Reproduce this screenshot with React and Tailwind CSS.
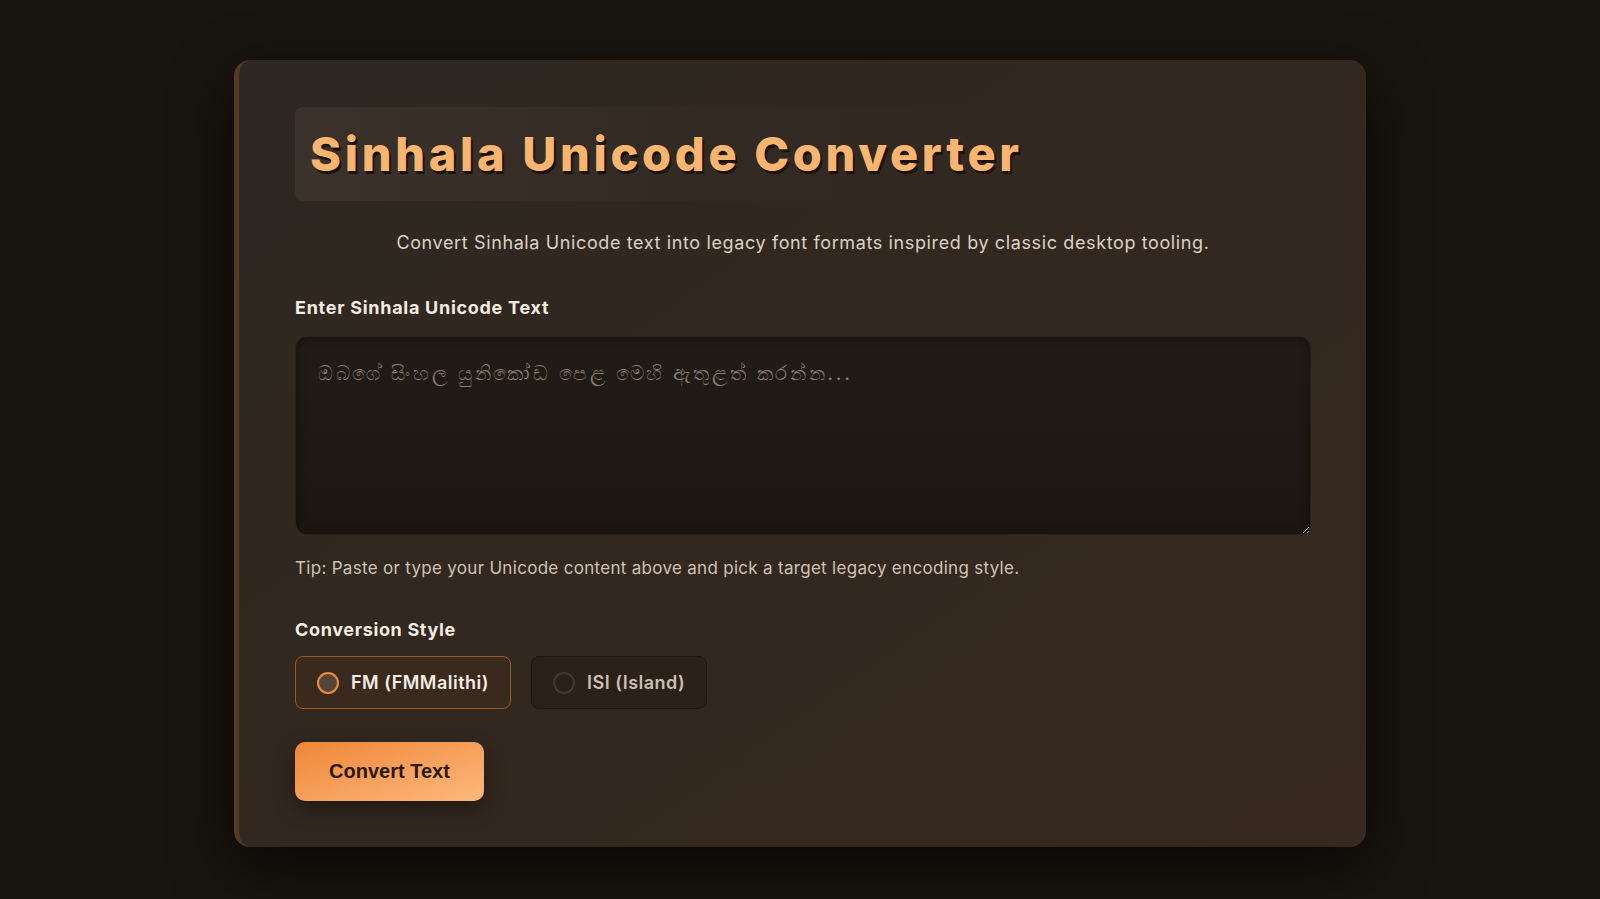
import React, { useState } from 'react'

const styles = [
  { id: 'fm', label: 'FM (FMMalithi)' },
  { id: 'isi', label: 'ISI (Island)' },
]

const StyleOption = ({ option, checked, onSelect }) => (
  <label
    className={`flex items-center gap-[12px] h-[53px] rounded-[8px] border cursor-pointer pl-[21px] pr-[21px] ${
      checked
        ? 'border-[#9c5a2a] bg-[#3a2a1e] text-[#f5ede3]'
        : 'border-[#1e1813] bg-[#2a2119] text-[#cbbfb2]'
    }`}
  >
    <input type="radio" name="style" className="sr-only" checked={checked} onChange={() => onSelect(option.id)} />
    <span
      className={`w-[22px] h-[22px] rounded-full ${
        checked ? 'border-2 border-[#ef8b3c] bg-[#55433a]' : 'border-2 border-[#453a31] bg-transparent'
      }`}
    />
    <span className="text-[18px] font-semibold tracking-[0.5px]">{option.label}</span>
  </label>
)

const App = () => {
  const [text, setText] = useState('')
  const [style, setStyle] = useState('fm')

  return (
    <div className="min-h-[899px] bg-[#18140f] pt-[60px] font-['Inter',sans-serif]">
      <div className="w-[1132px] mx-auto rounded-[16px] border-l-[5px] border-[#573822] bg-gradient-to-br from-[#2e2822] via-[#32281f] to-[#37291f] shadow-[0_20px_60px_rgba(0,0,0,0.55)] pl-[56px] pr-[55px] pt-[47px] pb-[46px]">
        {/* heading */}
        <div className="inline-block rounded-[8px] bg-gradient-to-r from-[#3a322b] via-[#322a23] to-transparent px-[15px] py-[12px]">
          <h1 className="text-[47px] leading-[70px] font-extrabold tracking-[3.65px] text-[#f8b571] [text-shadow:2px_3px_0_#1a120b]">
            Sinhala Unicode Converter
          </h1>
        </div>

        <p className="mt-[28px] text-center text-[18px] leading-[28px] tracking-[0.62px] text-[#dcd1c4]">
          Convert Sinhala Unicode text into legacy font formats inspired by classic desktop tooling.
        </p>

        <label className="block mt-[39px] text-[18px] leading-[24px] font-bold tracking-[0.72px] text-[#f4ece1]">
          Enter Sinhala Unicode Text
        </label>
        <textarea
          value={text}
          onChange={(e) => setText(e.target.value)}
          placeholder="ඔබගේ සිංහල යුනිකෝඩ පෙළ මෙහි ඇතුළත් කරන්න..."
          className="mt-[16px] block w-full h-[199px] rounded-[12px] border border-[#2a221b] bg-gradient-to-b from-[#221c17] to-[#1b1612] shadow-[inset_0_2px_8px_rgba(0,0,0,0.45)] px-[22px] pt-[20px] pb-[20px] text-[20px] leading-[32px] tracking-[2.7px] text-[#eadfd2] placeholder:text-[#8b7f72] outline-none"
        />
        <p className="mt-[20px] text-[17px] leading-[26px] tracking-[0.3px] text-[#cfc2b4]">
          Tip: Paste or type your Unicode content above and pick a target legacy encoding style.
        </p>

        <div className="mt-[37px] text-[18px] leading-[24px] font-bold tracking-[0.65px] text-[#f4ece1]">Conversion Style</div>
        <div className="mt-[14px] flex gap-[20px]">
          {styles.map((option) => (
            <StyleOption key={option.id} option={option} checked={style === option.id} onSelect={setStyle} />
          ))}
        </div>

        <button
          type="button"
          className="mt-[33px] w-[189px] h-[59px] rounded-[10px] bg-gradient-to-br from-[#ee8634] to-[#fdb87c] shadow-[0_8px_20px_rgba(0,0,0,0.4)] font-['Liberation_Sans',Arial,sans-serif] text-[20px] leading-[59px] font-bold text-[#2a190c]"
        >
          Convert Text
        </button>
      </div>
    </div>
  )
}

export default App
